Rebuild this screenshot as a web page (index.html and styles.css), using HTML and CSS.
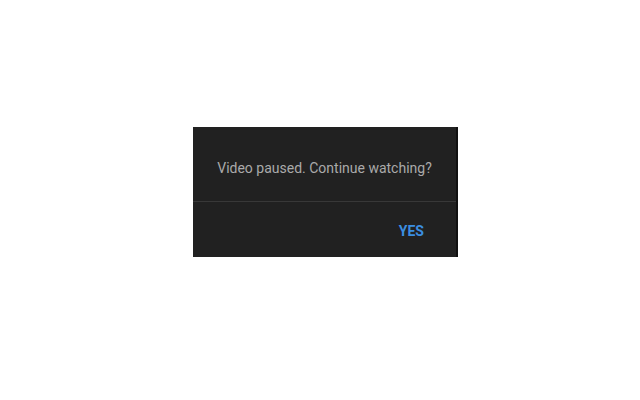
FILE: index.html
```html
<!DOCTYPE html>
<html>
<head>
<meta charset="utf-8">
<link rel="stylesheet" href="styles.css">
</head>
<body>
<div class="stage">
  <div class="dialog">
    <div class="message">Video paused. Continue watching?</div>
    <div class="actions">
      <button class="yes">YES</button>
    </div>
  </div>
</div>
</body>
</html>
```
FILE: styles.css
```css
html, body {
  margin: 0;
  padding: 0;
  background: #ffffff;
}
.stage {
  width: 640px;
  height: 400px;
  box-sizing: border-box;
  padding-top: 127px;
  padding-left: 193px;
}
.dialog {
  width: 265px;
  height: 130px;
  box-sizing: border-box;
  background: #212121;
  border-right: 2px solid #111111;
  display: flex;
  flex-direction: column;
  font-family: Roboto, "Noto Sans", sans-serif;
}
.message {
  height: 75px;
  box-sizing: border-box;
  padding-top: 31px;
  line-height: 20px;
  font-size: 14px;
  color: #aaaaaa;
  text-align: center;
  border-bottom: 1px solid #383838;
}
.actions {
  flex: 1;
  display: flex;
  justify-content: flex-end;
  align-items: center;
  padding-top: 3px;
  padding-right: 24px;
}
.yes {
  background: none;
  border: none;
  padding: 8px 8px;
  font-family: Roboto, "Noto Sans", sans-serif;
  font-weight: 700;
  font-size: 14px;
  letter-spacing: 0;
  color: #3b8ee0;
  cursor: pointer;
}
```
